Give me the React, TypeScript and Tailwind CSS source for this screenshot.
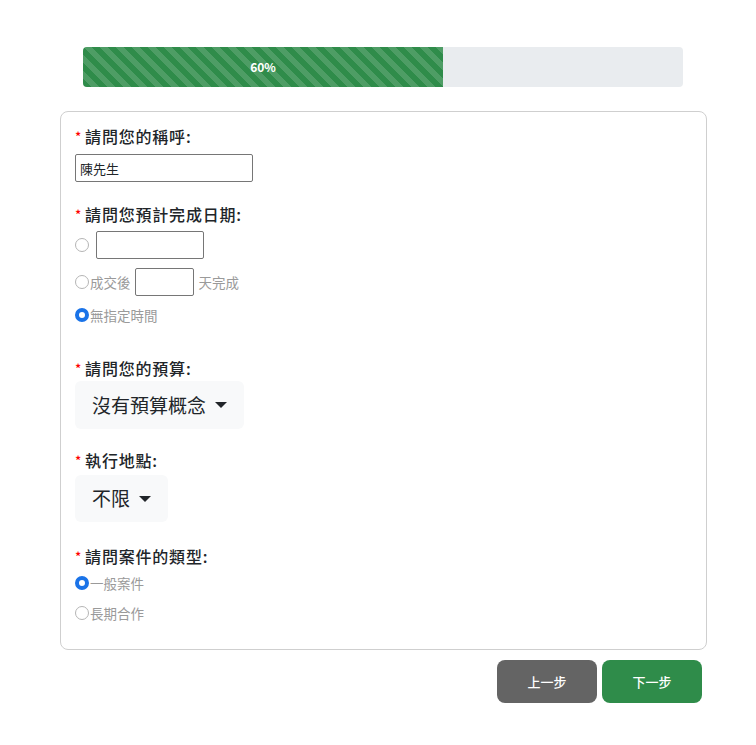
import React from "react";

const font = { fontFamily: '"Noto Sans CJK TC", "Noto Sans", sans-serif' };

function Label({ text }: { text: string }) {
  return (
    <div className="flex h-[22px] items-center text-[16px] font-medium leading-[22px] tracking-[0.8px] text-[#212529]">
      <span className="mr-[3px] text-[13px] leading-none text-[#f00]">*</span>
      {text}:
    </div>
  );
}

function Radio({ checked }: { checked?: boolean }) {
  return checked ? (
    <span className="inline-block h-[14px] w-[14px] shrink-0 rounded-full border-[4px] border-[#1a73e8] bg-white" />
  ) : (
    <span className="inline-block h-[14px] w-[14px] shrink-0 rounded-full border border-[#b5b5b5] bg-white" />
  );
}

function Dropdown({ text }: { text: string }) {
  return (
    <button className="flex items-center gap-[9px] rounded-[6px] bg-[#f8f9fa] pl-[17px] pr-[17px] text-[19px] text-[#212529]">
      {text}
      <span className="h-0 w-0 border-x-[6px] border-t-[6px] border-x-transparent border-t-[#212529]" />
    </button>
  );
}

export default function App() {
  return (
    <div className="min-h-[745px] w-[756px] bg-white pt-[47px]" style={font}>
      <div className="ml-[83px] flex h-[40px] w-[600px] overflow-hidden rounded-[4px] bg-[#e9ecef]">
        <div className="flex h-full w-[60%] items-center justify-center bg-[#2f8c4a] bg-[linear-gradient(45deg,rgba(255,255,255,.15)_25%,transparent_25%,transparent_50%,rgba(255,255,255,.15)_50%,rgba(255,255,255,.15)_75%,transparent_75%,transparent)] bg-[length:16px_16px] text-[12px] font-bold text-white">
          60%
        </div>
      </div>

      <div className="ml-[60px] mt-[24px] w-[647px] rounded-[8px] border border-[#cfcfcf] px-[14px] pb-[27px] pt-[13px]">
        <Label text="請問您的稱呼" />
        <input
          defaultValue="陳先生"
          className="mt-[7px] block h-[28px] w-[178px] rounded-[2px] border border-[#767676] px-[4px] text-[13px] text-[#212529] outline-none"
        />

        <div className="mt-[21px]">
          <Label text="請問您預計完成日期" />
          <div className="mt-[6px] flex items-center gap-[7px]">
            <Radio />
            <div className="h-[28px] w-[108px] rounded-[2px] border border-[#767676]" />
          </div>
          <div className="mt-[9px] flex items-center text-[13.5px] text-[#9a9a9a]">
            <Radio />
            <span className="ml-[1px]">成交後</span>
            <div className="ml-[4px] h-[28px] w-[59px] rounded-[2px] border border-[#767676]" />
            <span className="ml-[5px]">天完成</span>
          </div>
          <div className="mt-[10px] flex h-[18px] items-center text-[13.5px] text-[#9a9a9a]">
            <Radio checked />
            <span className="ml-[1px]">無指定時間</span>
          </div>
        </div>

        <div className="mt-[33px]">
          <Label text="請問您的預算" />
          <div className="mt-[2px] flex h-[48px]">
            <Dropdown text="沒有預算概念" />
          </div>
        </div>

        <div className="mt-[20px]">
          <Label text="執行地點" />
          <div className="mt-[4px] flex h-[47px]">
            <Dropdown text="不限" />
          </div>
        </div>

        <div className="mt-[23px]">
          <Label text="請問案件的類型" />
          <div className="mt-[7px] flex h-[18px] items-center text-[13.5px] text-[#9a9a9a]">
            <Radio checked />
            <span className="ml-[1px]">一般案件</span>
          </div>
          <div className="mt-[12px] flex h-[18px] items-center text-[13.5px] text-[#9a9a9a]">
            <Radio />
            <span className="ml-[1px]">長期合作</span>
          </div>
        </div>
      </div>

      <div className="ml-[497px] mt-[10px] flex gap-[5px]">
        <button className="h-[43px] w-[100px] rounded-[8px] bg-[#646464] text-[13px] font-medium text-white">
          上一步
        </button>
        <button className="h-[43px] w-[100px] rounded-[8px] bg-[#2f8c4a] text-[13px] font-medium text-white">
          下一步
        </button>
      </div>
    </div>
  );
}
